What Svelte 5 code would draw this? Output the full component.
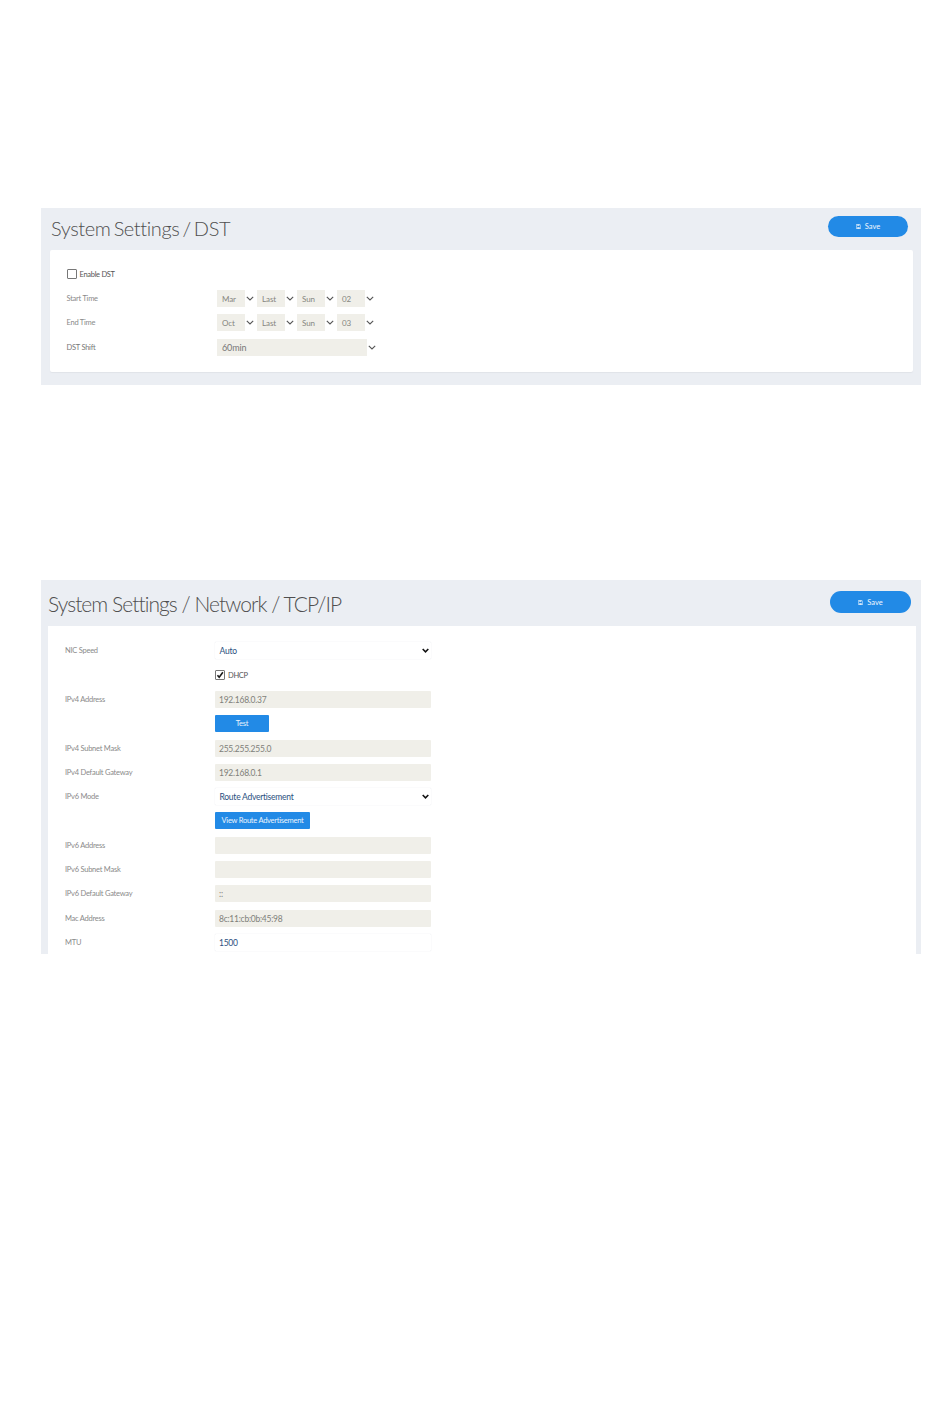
<script>
  const dstRows = [
    { label: 'Start Time', parts: ['Mar', 'Last', 'Sun', '02'] },
    { label: 'End Time', parts: ['Oct', 'Last', 'Sun', '03'] }
  ];
  const net = [
    { k: 'select', label: 'NIC Speed', v: 'Auto' },
    { k: 'check', label: '', v: 'DHCP' },
    { k: 'ro', label: 'IPv4 Address', v: '192.168.0.37' },
    { k: 'btn', label: '', v: 'Test', cls: 'test' },
    { k: 'ro', label: 'IPv4 Subnet Mask', v: '255.255.255.0' },
    { k: 'ro', label: 'IPv4 Default Gateway', v: '192.168.0.1' },
    { k: 'select', label: 'IPv6 Mode', v: 'Route Advertisement' },
    { k: 'btn', label: '', v: 'View Route Advertisement', cls: 'view' },
    { k: 'ro', label: 'IPv6 Address', v: '' },
    { k: 'ro', label: 'IPv6 Subnet Mask', v: '' },
    { k: 'ro', label: 'IPv6 Default Gateway', v: '::' },
    { k: 'ro', label: 'Mac Address', v: '8c:11:cb:0b:45:98' },
    { k: 'edit', label: 'MTU', v: '1500' }
  ];
</script>

{#snippet chevron(cls)}
  <svg class={cls} viewBox="0 0 8 5" aria-hidden="true"><path d="M.8.8 4 4 7.200.8" fill="none" stroke="currentColor" /></svg>
{/snippet}

{#snippet save()}
  <button class="save" type="button">
    <svg viewBox="0 0 8 8" aria-hidden="true"><path d="M.5.5h5.600l1.400 1.400v5.600H.5z" fill="none" stroke="currentColor" /><path d="M2 .8h3.500v2H2zM2 5h4v2.500H2z" fill="currentColor" /></svg>
    Save
  </button>
{/snippet}

<main class="page">
  <section class="panel dst">
    <header class="head">
      <h1>System Settings / DST</h1>
      {@render save()}
    </header>
    <div class="card">
      <div class="row">
        <label class="check">
          <span class="box"></span>
          <span>Enable DST</span>
        </label>
      </div>
      {#each dstRows as r}
        <div class="row split">
          <span class="label">{r.label}</span>
          <div class="parts">
            {#each r.parts as p}
              <div class="dd">
                <span class="fill">{p}</span>
                <span class="arrow">{@render chevron('chev')}</span>
              </div>
            {/each}
          </div>
        </div>
      {/each}
      <div class="row split">
        <span class="label dark">DST Shift</span>
        <div class="dd wide">
          <span class="fill">60min</span>
          <span class="arrow">{@render chevron('chev')}</span>
        </div>
      </div>
    </div>
  </section>

  <section class="panel network">
    <header class="head">
      <h1>System Settings / Network / TCP/IP</h1>
      {@render save()}
    </header>
    <div class="card">
      {#each net as r}
        <div class="row split">
          <span class="label">{r.label}</span>
          {#if r.k === 'select'}
            <div class="field select">
              <span>{r.v}</span>
              {@render chevron('chev strong')}
            </div>
          {:else if r.k === 'check'}
            <label class="check">
              <span class="box on"><svg viewBox="0 0 10 10" aria-hidden="true"><path d="M1.800 5.200 4 7.800 8.600 1.600" fill="none" stroke="#1c1c1c" stroke-width="2" /></svg></span>
              <span>{r.v}</span>
            </label>
          {:else if r.k === 'btn'}
            <button class="action {r.cls}" type="button">{r.v}</button>
          {:else if r.k === 'ro'}
            <div class="field ro">{r.v}</div>
          {:else}
            <div class="field edit">{r.v}</div>
          {/if}
        </div>
      {/each}
    </div>
  </section>
</main>

<style>
  :global(body) {
    margin: 0;
    background: #fff;
  }
  .page {
    box-sizing: border-box;
    width: 950px;
    height: 1409px;
    padding: 208px 29px 0 41px;
    font-family: Lato, "Open Sans", sans-serif;
    color: #777;
  }
  .panel {
    box-sizing: border-box;
    background: #ebeef3;
  }
  .head {
    display: flex;
    align-items: center;
    justify-content: space-between;
  }
  h1 {
    margin: 0;
    font-weight: 300;
    color: #4f4f4f;
    white-space: nowrap;
  }
  .save {
    display: flex;
    align-items: center;
    justify-content: center;
    gap: 4px;
    border: 0;
    border-radius: 11px;
    background: #228ae6;
    color: #f2f8fe;
    font: 7.500px Lato, sans-serif;
    padding: 0;
  }
  .save svg {
    width: 5px;
    height: 5px;
  }
  .card {
    box-sizing: border-box;
    background: #fff;
  }
  .row {
    height: 24.300px;
    display: flex;
    align-items: center;
  }
  .label {
    flex: none;
    font-size: 7.500px;
    letter-spacing: -0.25px;
    color: #8a8a8a;
  }
  .label.dark {
    color: #777;
  }
  .check {
    display: flex;
    align-items: center;
    gap: 3px;
    font-size: 7.500px;
    letter-spacing: -0.3px;
    color: #555;
  }
  .box {
    box-sizing: border-box;
    display: block;
    width: 10px;
    height: 10px;
    border: 1px solid #777;
    border-radius: 1px;
  }
  .box svg {
    display: block;
    width: 8px;
    height: 8px;
  }

  /* DST panel */
  .dst {
    height: 177px;
    padding: 0 8px 13px 9px;
  }
  .dst .head {
    height: 42px;
  }
  .dst h1 {
    font-size: 20px;
    letter-spacing: -0.4px;
    word-spacing: -1.9px;
    margin: -2px 0 0 1px;
  }
  .dst .save {
    width: 80px;
    height: 21px;
    margin: -5px 5px 0 0;
  }
  .dst .card {
    height: 122px;
    padding: 12.200px 16.500px 0;
    border-radius: 2px;
    box-shadow: 0 1px 1px #e0e3e8;
  }
  .dst .label {
    width: 150.500px;
  }
  .parts {
    display: flex;
    gap: 2px;
  }
  .dd {
    display: flex;
    height: 17px;
    font-size: 8px;
    letter-spacing: -0.1px;
  }
  .fill {
    box-sizing: border-box;
    width: 28px;
    padding-left: 5px;
    line-height: 18px;
    background: #f0efe9;
    color: #85857f;
  }
  .arrow {
    width: 10px;
    display: flex;
    align-items: center;
    padding-left: 1px;
    box-sizing: border-box;
    color: #555;
  }
  .chev {
    width: 8px;
    height: 5px;
    display: block;
    stroke-width: 1.1;
  }
  .dd.wide .fill {
    width: 150px;
    font-size: 9px;
    color: #777;
  }

  /* Network panel */
  .network {
    height: 374px;
    margin-top: 195px;
    padding: 0 5px 0 7px;
  }
  .network .head {
    height: 46px;
  }
  .network h1 {
    font-size: 21px;
    letter-spacing: -0.95px;
    margin-top: 1px;
  }
  .network .save {
    width: 81px;
    height: 22px;
    margin: -2px 5px 0 0;
  }
  .network .card {
    height: 328px;
    padding: 12.700px 17px 0;
  }
  .network .label {
    width: 150px;
  }
  .field {
    box-sizing: border-box;
    width: 216px;
    height: 17px;
    line-height: 18px;
    padding-left: 4px;
    font-size: 8.500px;
    letter-spacing: -0.25px;
    border-radius: 1px;
    white-space: nowrap;
  }
  .ro {
    background: #f0efe9;
    color: #7f7f7a;
  }
  .select,
  .edit {
    color: #2b5080;
    box-shadow: 0 0 1px #cfd3d9;
  }
  .select {
    display: flex;
    align-items: center;
    justify-content: space-between;
    padding: 0 2px 0 4.500px;
  }
  .strong {
    color: #111;
    width: 7px;
    stroke-width: 1.8;
  }
  .action {
    height: 17px;
    padding: 0;
    border: 0;
    border-radius: 1px;
    background: #228ae6;
    color: #eaf4fd;
    font: 7.500px Lato, sans-serif;
    letter-spacing: -0.25px;
  }
  .test {
    width: 54px;
  }
  .view {
    width: 95px;
  }
</style>
